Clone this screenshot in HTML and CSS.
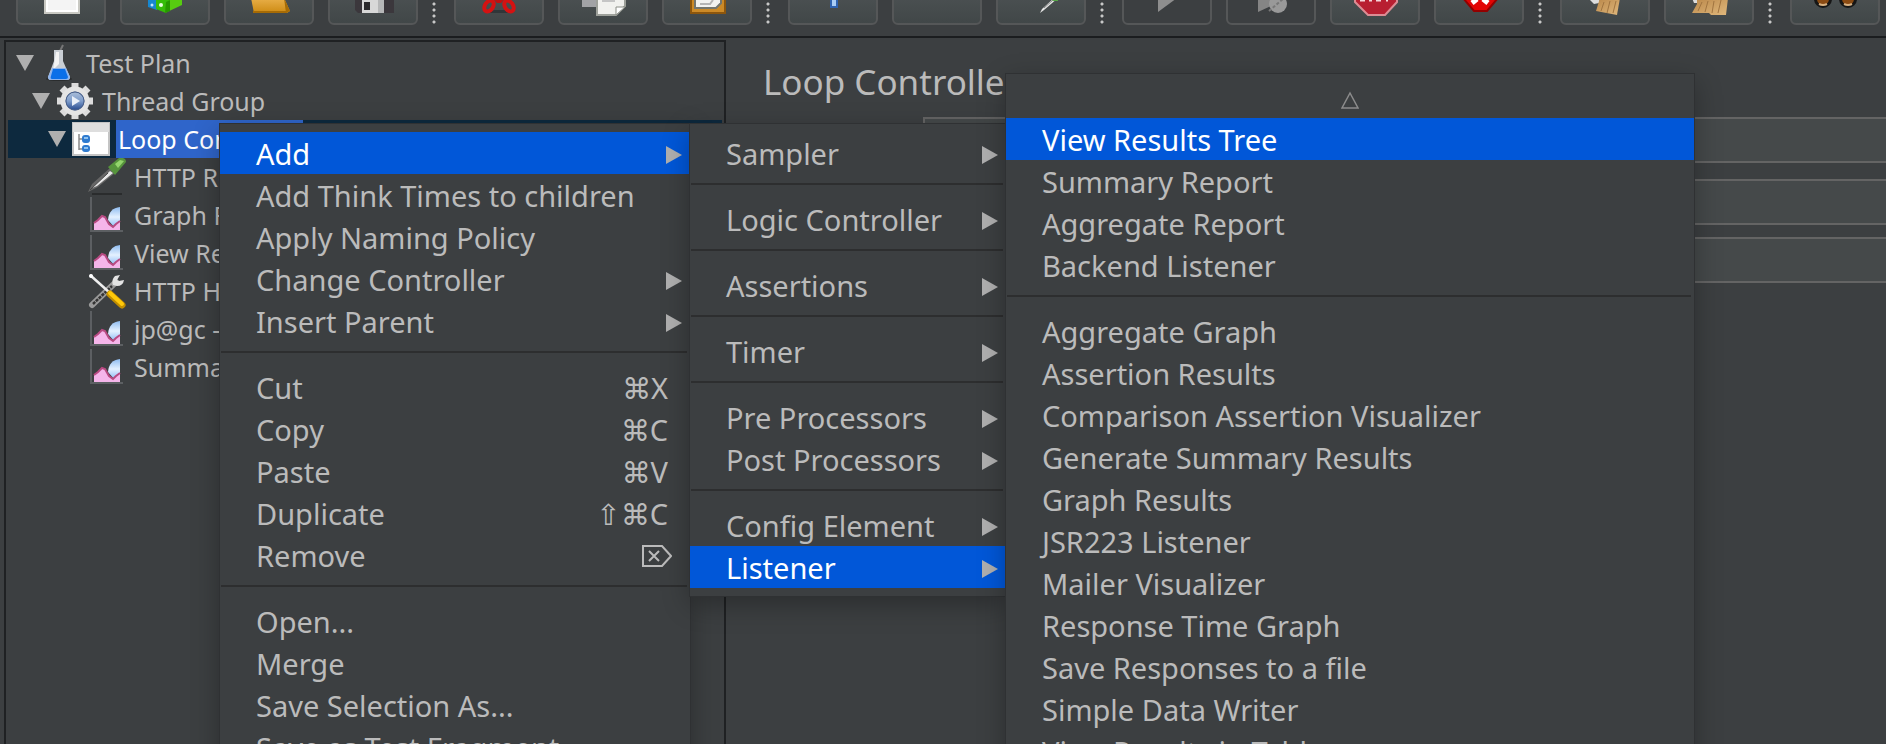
FILE: index.html
```html
<!DOCTYPE html>
<html lang="en">
<head>
<meta charset="utf-8">
<title>Test Plan</title>
<link rel="stylesheet" href="styles.css">
</head>
<body>
<svg class="defs" aria-hidden="true">
  <defs>
    <linearGradient id="sky" x1="0" y1="0" x2="0" y2="1"><stop offset="0" stop-color="#8fbcf0"/><stop offset=".5" stop-color="#e4f1ff"/><stop offset="1" stop-color="#8fbcf5"/></linearGradient>
    <linearGradient id="gold" x1="0" y1="0" x2="0" y2="1"><stop offset="0" stop-color="#e9b04a"/><stop offset="1" stop-color="#cd8a12"/></linearGradient>
    <linearGradient id="lens" x1="0" y1="0" x2="0" y2="1"><stop offset="0" stop-color="#a9bdd8"/><stop offset=".5" stop-color="#7f9dcb"/><stop offset="1" stop-color="#274b8f"/></linearGradient>
    <linearGradient id="straw" x1="0" y1="0" x2="1" y2="1"><stop offset="0" stop-color="#b98648"/><stop offset="1" stop-color="#e0b87c"/></linearGradient>
    <symbol id="graph" viewBox="0 0 38 38">
      <path d="M3 1V35H35" fill="none" stroke="#5c5f62" stroke-width="2"/>
      <path d="M32 11V30L26 31L20 24Q21 12 32 11Z" fill="url(#sky)"/>
      <path d="M6 34V27L10 24L14 20L17 21L21 28L25 31L28 28L32 25V34Z" fill="#f5b5ea"/>
      <path d="M6 27L10 24L14 20L17 21L21 28L25 31L28 28L32 25" fill="none" stroke="#b84a82" stroke-width="2"/>
    </symbol>
  </defs>
</svg>

<header class="toolbar" role="toolbar" aria-label="Main toolbar">
  <button class="tool" aria-label="New"><svg viewBox="2 0 86 23"><path d="M29-10H63V13H29Z" fill="#f4f4f4" stroke="#c9c9c3" stroke-width="2"/><path d="M31-1H61V11H31Z" fill="none" stroke="#fff" stroke-width="2"/></svg></button>
  <button class="tool" aria-label="Templates"><svg viewBox="2 0 86 23"><path d="M28-2H37V10L28 7Z" fill="#1687d0"/><path d="M36-2H50L46 13L36 9Z" fill="#35bd08"/><path d="M50-2H62V5L45 13Z" fill="#57cc10"/><path d="M46 2L50 0V11L45 13Z" fill="#269800"/><circle cx="41" cy="5" r="2" fill="#e8ffe0"/><circle cx="32" cy="5" r="1.5" fill="#bfe4ff"/></svg></button>
  <button class="tool" aria-label="Open"><svg viewBox="2 0 86 23"><path d="M27-2H60L66 11L63 13H30Z" fill="url(#gold)"/><path d="M60-2L66 11L62 13" fill="#a66b05"/><path d="M29 12H63" stroke="#a66b05" stroke-width="2"/></svg></button>
  <button class="tool" aria-label="Save"><svg viewBox="2 0 86 23"><path d="M27-2H66V13H30L27 10Z" fill="#3b373c"/><path d="M34-1H56V13H34Z" fill="#d8d8d8"/><path d="M36 2H42V10H36Z" fill="#2b292c"/><path d="M50 0H56V13H50Z" fill="#b6b7b8"/></svg></button>
  <span class="dots"></span>
  <button class="tool" aria-label="Cut"><svg viewBox="2 0 86 23"><path d="M35 13H56L50 10H40Z" fill="#303639"/><g fill="none" stroke="#d41212" stroke-width="4"><ellipse cx="35" cy="6" rx="4" ry="6" transform="rotate(35 35 6)"/><ellipse cx="55" cy="6" rx="4" ry="6" transform="rotate(-35 55 6)"/></g><path d="M39-2H51L47 3H43Z" fill="#c01010"/></svg></button>
  <button class="tool" aria-label="Copy"><svg viewBox="2 0 86 23"><path d="M24-2H39V7H24Z" fill="#a2a3a6"/><path d="M39-2H67V6L58 15H39Z" fill="#f1f1ee" stroke="#9da09a" stroke-width="2"/><path d="M44 1H57" stroke="#c5c5c5" stroke-width="2"/><path d="M58 15V7H67Z" fill="#fff" stroke="#8b8e87"/></svg></button>
  <button class="tool" aria-label="Paste"><svg viewBox="2 0 86 23"><path d="M29-2H63V13H29Z" fill="#cc8a27" stroke="#8c560d" stroke-width="2"/><path d="M33-2H59V3L54 8H33Z" fill="#f2f2f0" stroke="#74766f" stroke-width="2"/><path d="M38 4H48L51 0" fill="none" stroke="#b5b5b5" stroke-width="2"/></svg></button>
  <span class="dots"></span>
  <button class="tool" aria-label="Expand All"><svg viewBox="2 0 86 23"><path d="M43-2H49V7H43Z" fill="#a9cdf5" stroke="#2f63b0" stroke-width="2"/></svg></button>
  <button class="tool" aria-label="Collapse All"></button>
  <button class="tool" aria-label="Toggle"><svg viewBox="2 0 86 23"><path d="M44 13L46 9L58-2H62L48 10Z" fill="#e6e6e6"/><path d="M48 8L57 0" stroke="#888" stroke-width="1"/><path d="M56 1L59-1H62V1Z" fill="#58a848"/></svg></button>
  <span class="dots"></span>
  <button class="tool off" aria-label="Start"><svg viewBox="2 0 86 23"><path d="M36-2H55L36 12Z" fill="#8e8e8e"/></svg></button>
  <button class="tool off" aria-label="Start no pauses"><svg viewBox="2 0 86 23"><path d="M32-2H47V5L32 12Z" fill="#858585"/><circle cx="52" cy="4" r="9" fill="#999"/><path d="M43 11L58-2" stroke="#777" stroke-width="2" stroke-dasharray="3 2"/></svg></button>
  <button class="tool" aria-label="Stop"><svg viewBox="2 0 86 23"><path d="M25-4V2L38 15H55L67 2V-4Z" fill="#b81f31" stroke="#dc8c94" stroke-width="2"/><path d="M30 0H35M39 0H42M46 0H51M56 0H58" stroke="#f5d6da" stroke-width="3"/></svg></button>
  <button class="tool" aria-label="Shutdown"><svg viewBox="2 0 86 23"><path d="M29-2L40 11H53L64-2Z" fill="#e20404" stroke="#930000" stroke-width="2"/><path d="M38 3L43-1M54 3L49-1" stroke="#fff" stroke-width="5"/></svg></button>
  <span class="dots"></span>
  <button class="tool" aria-label="Clear"><svg viewBox="2 0 86 23"><path d="M28-2H40L39 3L34 4Z" fill="#ddd"/><path d="M40-2H60L57 15L36 11Z" fill="url(#straw)"/><path d="M44 2L41 11M50 1L47 13M56 1L53 13" stroke="#a07440"/></svg></button>
  <button class="tool" aria-label="Clear All"><svg viewBox="2 0 86 23"><path d="M28-2H35V3H30Z" fill="#ddd"/><path d="M33-2H64L62 15H47L45 13H28L33 4Z" fill="url(#straw)"/><path d="M38 2L34 11M44 1L41 12M50 1L48 13M57 0L54 13" stroke="#a07440"/></svg></button>
  <span class="dots"></span>
  <button class="tool" aria-label="Search"><svg viewBox="2 0 86 23"><g fill="#8a4a12" stroke="#161616" stroke-width="3"><circle cx="33" cy="-1" r="7.5"/><circle cx="58" cy="-1" r="7.5"/></g><path d="M29 4Q33 6 37 4M54 4Q58 6 62 4" fill="none" stroke="#d8b080" stroke-width="2"/></svg></button>
</header>

<main class="workspace">
  <nav class="tree" role="tree" aria-label="Test plan">
    <div class="node" role="treeitem"><i class="twist"></i>
      <svg class="pic" viewBox="0 0 38 38"><ellipse cx="19" cy="35" rx="13" ry="2" fill="#2a2c2d"/><path d="M20 7L23 1" stroke="#777" stroke-width="2"/><path d="M14 6H23V17L30 33Q30 36 27 36H11Q8 36 8 33L14 17Z" fill="#c9ced4"/><path d="M16 8H19V20L13 26Z" fill="#f4f4f4"/><path d="M12 24H26L30 33Q30 36 27 36H11Q8 36 8 33Z" fill="#8fb4ec"/><path d="M13 25H25L28 33Q28 35 26 35H12Q10 35 11 32Z" fill="#0a6fe8"/></svg>
      <span class="name">Test Plan</span></div>
    <div class="node l2" role="treeitem"><i class="twist"></i>
      <svg class="pic" viewBox="0 0 38 38"><g stroke="#dcdcdc" stroke-width="7"><path d="M19 1V37M1 19H37"/><path d="M6 6L32 32M32 6L6 32"/></g><circle cx="19" cy="19" r="12" fill="#5b6f93" stroke="#e4e4e4" stroke-width="5"/><circle cx="19" cy="19" r="9" fill="url(#lens)" stroke="#48608c"/><path d="M16 14L24 19L16 24Z" fill="#e9eff8"/></svg>
      <span class="name">Thread Group</span></div>
    <div class="node l3 selected" role="treeitem" aria-selected="true"><i class="twist"></i>
      <svg class="pic" viewBox="0 0 38 38"><path d="M0 2H38V36H0Z" fill="#c4c4c4"/><path d="M1 3H37V12H1Z" fill="#dedede"/><path d="M2 12H36V34H2Z" fill="#fff"/><path d="M7 14V30M7 19H10M7 29H10" stroke="#8a8a8a" stroke-width="1.5" fill="none"/><rect x="10" y="15" width="8" height="8" rx="3" fill="#2f7bcf"/><rect x="10" y="25" width="8" height="7" rx="3" fill="#2f7bcf"/><path d="M12 18H16M12 28H16" stroke="#8fc2ef" stroke-width="2"/></svg>
      <span class="name">Loop Controller</span></div>
    <div class="node l4" role="treeitem">
      <svg class="pic" viewBox="0 0 38 38"><path d="M4 36H34" stroke="#2a2c2d" stroke-width="2"/><path d="M0 34L4 26L22 10L27 15L10 29Z" fill="#666"/><path d="M4 30L22 13L25 15L9 28Z" fill="#e8e8e8"/><path d="M2 32L20 15" stroke="#444" stroke-width="1"/><path d="M20 9L31 0Q38-1 38 4L27 17Z" fill="#56943c"/><path d="M27 6L32 2L36 3L30 10Z" fill="#93d56c"/></svg>
      <span class="name">HTTP Request</span></div>
    <div class="node l4" role="treeitem"><svg class="pic"><use href="#graph"/></svg><span class="name">Graph Results</span></div>
    <div class="node l4" role="treeitem"><svg class="pic"><use href="#graph"/></svg><span class="name">View Results Tree</span></div>
    <div class="node l4" role="treeitem">
      <svg class="pic" viewBox="0 0 38 38"><path d="M4 33L28 10" stroke="#9a9a9a" stroke-width="6" stroke-linecap="round"/><path d="M5 32L24 14" stroke="#333" stroke-width="2.5" stroke-dasharray="3 1"/><path d="M32 3L27 4Q23 8 25 13L29 14Q35 14 36 8L31 9L29 8Z" fill="#e3e3e3"/><path d="M2 3L22 21" stroke="#eee" stroke-width="2.5"/><circle cx="3" cy="4" r="2" fill="#fff"/><path d="M22 22L34 33" stroke="#c18e00" stroke-width="7" stroke-linecap="round"/><path d="M22 21L34 32" stroke="#ffc90a" stroke-width="4" stroke-linecap="round"/></svg>
      <span class="name">HTTP Header Manager</span></div>
    <div class="node l4" role="treeitem"><svg class="pic"><use href="#graph"/></svg><span class="name">jp@gc - Transactions per Second</span></div>
    <div class="node l4" role="treeitem"><svg class="pic"><use href="#graph"/></svg><span class="name">Summary Report</span></div>
  </nav>
  <section class="panel">
    <h1>Loop Controller</h1>
    <input class="field" type="text" aria-label="Name">
    <input class="field second" type="text" aria-label="Comments">
    <input class="field" type="text" aria-label="Loop Count">
  </section>
</main>

<div class="menu context" role="menu">
  <button class="item active" role="menuitem">Add<i class="more"></i></button>
  <button class="item" role="menuitem">Add Think Times to children</button>
  <button class="item" role="menuitem">Apply Naming Policy</button>
  <button class="item" role="menuitem">Change Controller<i class="more"></i></button>
  <button class="item" role="menuitem">Insert Parent<i class="more"></i></button>
  <hr>
  <button class="item" role="menuitem">Cut<kbd>⌘X</kbd></button>
  <button class="item" role="menuitem">Copy<kbd>⌘C</kbd></button>
  <button class="item" role="menuitem">Paste<kbd>⌘V</kbd></button>
  <button class="item" role="menuitem">Duplicate<kbd>⇧⌘C</kbd></button>
  <button class="item" role="menuitem">Remove<svg class="del" viewBox="0 0 30 22" role="img" aria-label="Delete key"><path d="M1 1H20L29 11L20 21H1ZM7 6L17 16M17 6L7 16" fill="none" stroke="#bbb" stroke-width="2"/></svg></button>
  <hr>
  <button class="item" role="menuitem">Open...</button>
  <button class="item" role="menuitem">Merge</button>
  <button class="item" role="menuitem">Save Selection As...</button>
  <button class="item" role="menuitem">Save as Test Fragment</button>
</div>

<div class="menu add" role="menu">
  <button class="item" role="menuitem">Sampler<i class="more"></i></button>
  <hr>
  <button class="item" role="menuitem">Logic Controller<i class="more"></i></button>
  <hr>
  <button class="item" role="menuitem">Assertions<i class="more"></i></button>
  <hr>
  <button class="item" role="menuitem">Timer<i class="more"></i></button>
  <hr>
  <button class="item" role="menuitem">Pre Processors<i class="more"></i></button>
  <button class="item" role="menuitem">Post Processors<i class="more"></i></button>
  <hr>
  <button class="item" role="menuitem">Config Element<i class="more"></i></button>
  <button class="item active" role="menuitem">Listener<i class="more"></i></button>
</div>

<div class="menu listener" role="menu">
  <button class="scroll" aria-label="Scroll up"><svg width="18" height="18" viewBox="0 0 18 18"><path d="M9 2L17 17H1Z" fill="none" stroke="#8c8c8c" stroke-width="1.5"/></svg></button>
  <button class="item active" role="menuitem">View Results Tree</button>
  <button class="item" role="menuitem">Summary Report</button>
  <button class="item" role="menuitem">Aggregate Report</button>
  <button class="item" role="menuitem">Backend Listener</button>
  <hr>
  <button class="item" role="menuitem">Aggregate Graph</button>
  <button class="item" role="menuitem">Assertion Results</button>
  <button class="item" role="menuitem">Comparison Assertion Visualizer</button>
  <button class="item" role="menuitem">Generate Summary Results</button>
  <button class="item" role="menuitem">Graph Results</button>
  <button class="item" role="menuitem">JSR223 Listener</button>
  <button class="item" role="menuitem">Mailer Visualizer</button>
  <button class="item" role="menuitem">Response Time Graph</button>
  <button class="item" role="menuitem">Save Responses to a file</button>
  <button class="item" role="menuitem">Simple Data Writer</button>
  <button class="item" role="menuitem">View Results in Table</button>
</div>
</body>
</html>
```
FILE: styles.css
```css
* { box-sizing: border-box; }

body {
  margin: 0;
  height: 100vh;
  overflow: hidden;
  position: relative;
  display: flex;
  flex-direction: column;
  background: #3c3f41;
  color: #bbb;
  font-family: "Noto Sans", "Open Sans", "DejaVu Sans", sans-serif;
}

button { font: inherit; color: inherit; }

.defs { position: absolute; width: 0; height: 0; }

/* Toolbar, scrolled so that only its lower part shows */
.toolbar {
  display: flex;
  align-items: flex-end;
  gap: 14px;
  height: 38px;
  flex: none;
  overflow: hidden;
  padding: 0 0 11px 16px;
  border-bottom: 2px solid #1b1d1f;
}

.tool {
  flex: none;
  display: flex;
  align-items: flex-end;
  width: 90px;
  height: 60px;
  padding: 0;
  border: 2px solid #555758;
  border-radius: 6px;
  background: linear-gradient(#555a5c, #414748);
}

.tool.off { background: none; }

.tool svg { display: block; width: 86px; height: 23px; }

.dots {
  flex: none;
  width: 8px;
  height: 24px;
  background: radial-gradient(circle, #c8c8c8 1px, transparent 2px) 0 0 / 4px 6px repeat-y;
}

/* Workspace */
.workspace { flex: 1; display: flex; min-height: 0; }

.tree {
  flex: none;
  width: 722px;
  margin: 2px 0 0 4px;
  padding: 2px;
  border: 2px solid #1f2123;
  border-bottom: 0;
  overflow: hidden;
  font-size: 25px;
}

.node {
  display: flex;
  align-items: center;
  gap: 6px;
  height: 38px;
  padding-left: 8px;
  white-space: nowrap;
}

.l2 { padding-left: 24px; }
.l3 { padding-left: 40px; }
.l4 { padding-left: 80px; }

.twist {
  width: 18px;
  height: 16px;
  background: #afafaf;
  clip-path: polygon(0 0, 100% 0, 50% 100%);
}

.pic { flex: none; width: 38px; height: 38px; }

.name { padding: 0 2px; line-height: 38px; }

.selected { background: #0d293e; color: #fff; }
.selected .name { background: #2f65ca; }

.panel {
  flex: 1;
  display: flex;
  flex-direction: column;
  padding: 20px 0 0 37px;
}

h1 {
  margin: 0 0 11px;
  font-size: 35px;
  line-height: 48px;
  font-weight: 400;
}

.field {
  height: 46px;
  flex: none;
  margin: 0 0 16px 160px;
  border: 2px solid #646464;
  border-right: 0;
  background: #45494a;
  color: #bbb;
  font: inherit;
}

.second { margin-bottom: 12px; }

/* Cascading menus */
.menu {
  position: absolute;
  padding: 8px 0;
  background: #3c3f41;
  box-shadow: 0 0 0 1px #2f3133, 0 8px 26px rgba(0, 0, 0, .3);
  font-size: 29px;
}

.context { left: 220px; top: 124px; width: 470px; }
.add { left: 690px; top: 124px; width: 316px; }
.listener { left: 1006px; top: 74px; width: 688px; padding-top: 0; }

.item {
  display: flex;
  align-items: center;
  width: 100%;
  height: 42px;
  padding: 2px 8px 0 36px;
  border: 0;
  background: none;
  line-height: 40px;
  text-align: left;
  white-space: nowrap;
}

.active { background: #0157d8; color: #fff; }

.more {
  width: 16px;
  height: 18px;
  margin: 2px 0 0 auto;
  background: #afafaf;
  clip-path: polygon(0 0, 100% 50%, 0 100%);
}

kbd { margin: 0 14px 0 auto; font: inherit; }

.del { width: 30px; height: 22px; margin: 0 10px 0 auto; }

.menu hr {
  height: 2px;
  margin: 9px 3px 13px 1px;
  border: 0;
  background: #2d2e2f;
}

.scroll {
  display: flex;
  align-items: center;
  justify-content: center;
  width: 100%;
  height: 44px;
  padding: 8px 0 0;
  border: 0;
  background: none;
}
```
